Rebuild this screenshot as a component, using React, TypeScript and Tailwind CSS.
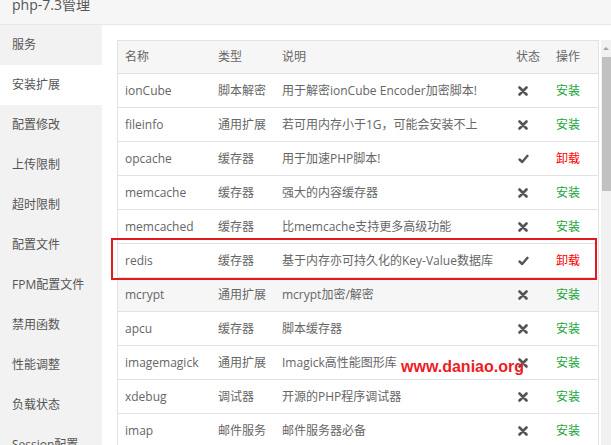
const menu = [
  "服务",
  "安装扩展",
  "配置修改",
  "上传限制",
  "超时限制",
  "配置文件",
  "FPM配置文件",
  "禁用函数",
  "性能调整",
  "负载状态",
  "Session配置",
];

// extension list
const rows = [
  { name: "ionCube", type: "脚本解密", desc: "用于解密ionCube Encoder加密脚本!", on: false },
  { name: "fileinfo", type: "通用扩展", desc: "若可用内存小于1G，可能会安装不上", on: false },
  { name: "opcache", type: "缓存器", desc: "用于加速PHP脚本!", on: true },
  { name: "memcache", type: "缓存器", desc: "强大的内容缓存器", on: false },
  { name: "memcached", type: "缓存器", desc: "比memcache支持更多高级功能", on: false },
  { name: "redis", type: "缓存器", desc: "基于内存亦可持久化的Key-Value数据库", on: true },
  { name: "mcrypt", type: "通用扩展", desc: "mcrypt加密/解密", on: false, hover: true },
  { name: "apcu", type: "缓存器", desc: "脚本缓存器", on: false },
  { name: "imagemagick", type: "通用扩展", desc: "Imagick高性能图形库", on: false },
  { name: "xdebug", type: "调试器", desc: "开源的PHP程序调试器", on: false },
  { name: "imap", type: "邮件服务", desc: "邮件服务器必备", on: false },
];

const Cross = () => (
  <svg width="10" height="10" viewBox="0 0 10 10">
    <path d="M1.5 1.5 L8.5 8.5 M8.5 1.5 L1.5 8.5" stroke="#555" strokeWidth="2.6" strokeLinecap="round" />
  </svg>
);

const Check = () => (
  <svg width="11" height="10" viewBox="0 0 11 10">
    <path d="M1.5 5.5 L4.2 8 L9.5 1.8" stroke="#555" strokeWidth="2.4" fill="none" strokeLinecap="round" strokeLinejoin="round" />
  </svg>
);

const App = () => {
  return (
    <div
      className="w-[611px] h-[445px] overflow-hidden bg-white text-[12px] text-[#666]"
      style={{ fontFamily: '"Open Sans", "Noto Sans CJK SC", sans-serif' }}
    >
      <div className="h-[25px] bg-[#f6f6f6] border-b border-[#e8e8e8] overflow-hidden">
        <div className="pl-[12px] -mt-[2px] text-[14px] leading-[14px] text-[#555]">php-7.3管理</div>
      </div>
      <div className="flex">
        <div className="w-[102px] h-[420px] bg-[#f2f2f2] flex flex-col">
          {menu.map((m) => (
            <div
              key={m}
              className={`h-[40px] shrink-0 flex items-center pl-[12px] text-[#555] ${m === "安装扩展" ? "bg-white" : ""}`}
            >
              {m}
            </div>
          ))}
        </div>
        <div className="flex-1 pt-[15px] pl-[15px] flex">
          <div className="relative w-[482px] border border-[#e2e2e2] self-start">
            <div className="grid grid-cols-[92px_64px_234px_40px_50px] h-[33px] items-center bg-[#f6f6f6] border-b border-[#e2e2e2]">
              <div className="pl-[7px]">名称</div>
              <div className="pl-[8px]">类型</div>
              <div className="pl-[8px]">说明</div>
              <div className="pl-[8px]">状态</div>
              <div className="pl-[8px]">操作</div>
            </div>
            {rows.map((r) => (
              <div
                key={r.name}
                className={`grid grid-cols-[92px_64px_234px_40px_50px] h-[34px] items-center border-b border-[#e2e2e2] ${r.hover ? "bg-[#f6f6f6]" : ""}`}
              >
                <div className="pl-[7px] whitespace-nowrap">{r.name}</div>
                <div className="pl-[8px] whitespace-nowrap">{r.type}</div>
                <div className="pl-[8px] whitespace-nowrap">{r.desc}</div>
                <div className="pl-[10px] flex items-center">{r.on ? <Check /> : <Cross />}</div>
                <div className={`pl-[8px] ${r.on ? "text-[#ff0000]" : "text-[#20a53a]"}`}>{r.on ? "卸载" : "安装"}</div>
              </div>
            ))}
            {/* highlight box */}
            <div className="absolute left-[-7px] top-[197px] w-[486px] h-[42px] border-2 border-[#e31a1c]" />
            <div
              className="absolute left-[283px] top-[314px] text-[16px] font-bold text-[#ee1c25] whitespace-nowrap"
              style={{ fontFamily: '"Liberation Sans", Arial, sans-serif' }}
            >
              www.daniao.org
            </div>
          </div>
          <div className="ml-[2px] w-[10px] h-[405px] bg-[#f1f1f1] flex flex-col items-center">
            <div className="h-[17px] flex items-center">
              <div className="w-0 h-0 border-l-[3px] border-r-[3px] border-b-[3px] border-l-transparent border-r-transparent border-b-[#a3a3a3]" />
            </div>
            <div className="w-[9px] ml-[1px] h-[134px] bg-[#c1c1c1]" />
          </div>
        </div>
      </div>
    </div>
  );
};

export default App;
